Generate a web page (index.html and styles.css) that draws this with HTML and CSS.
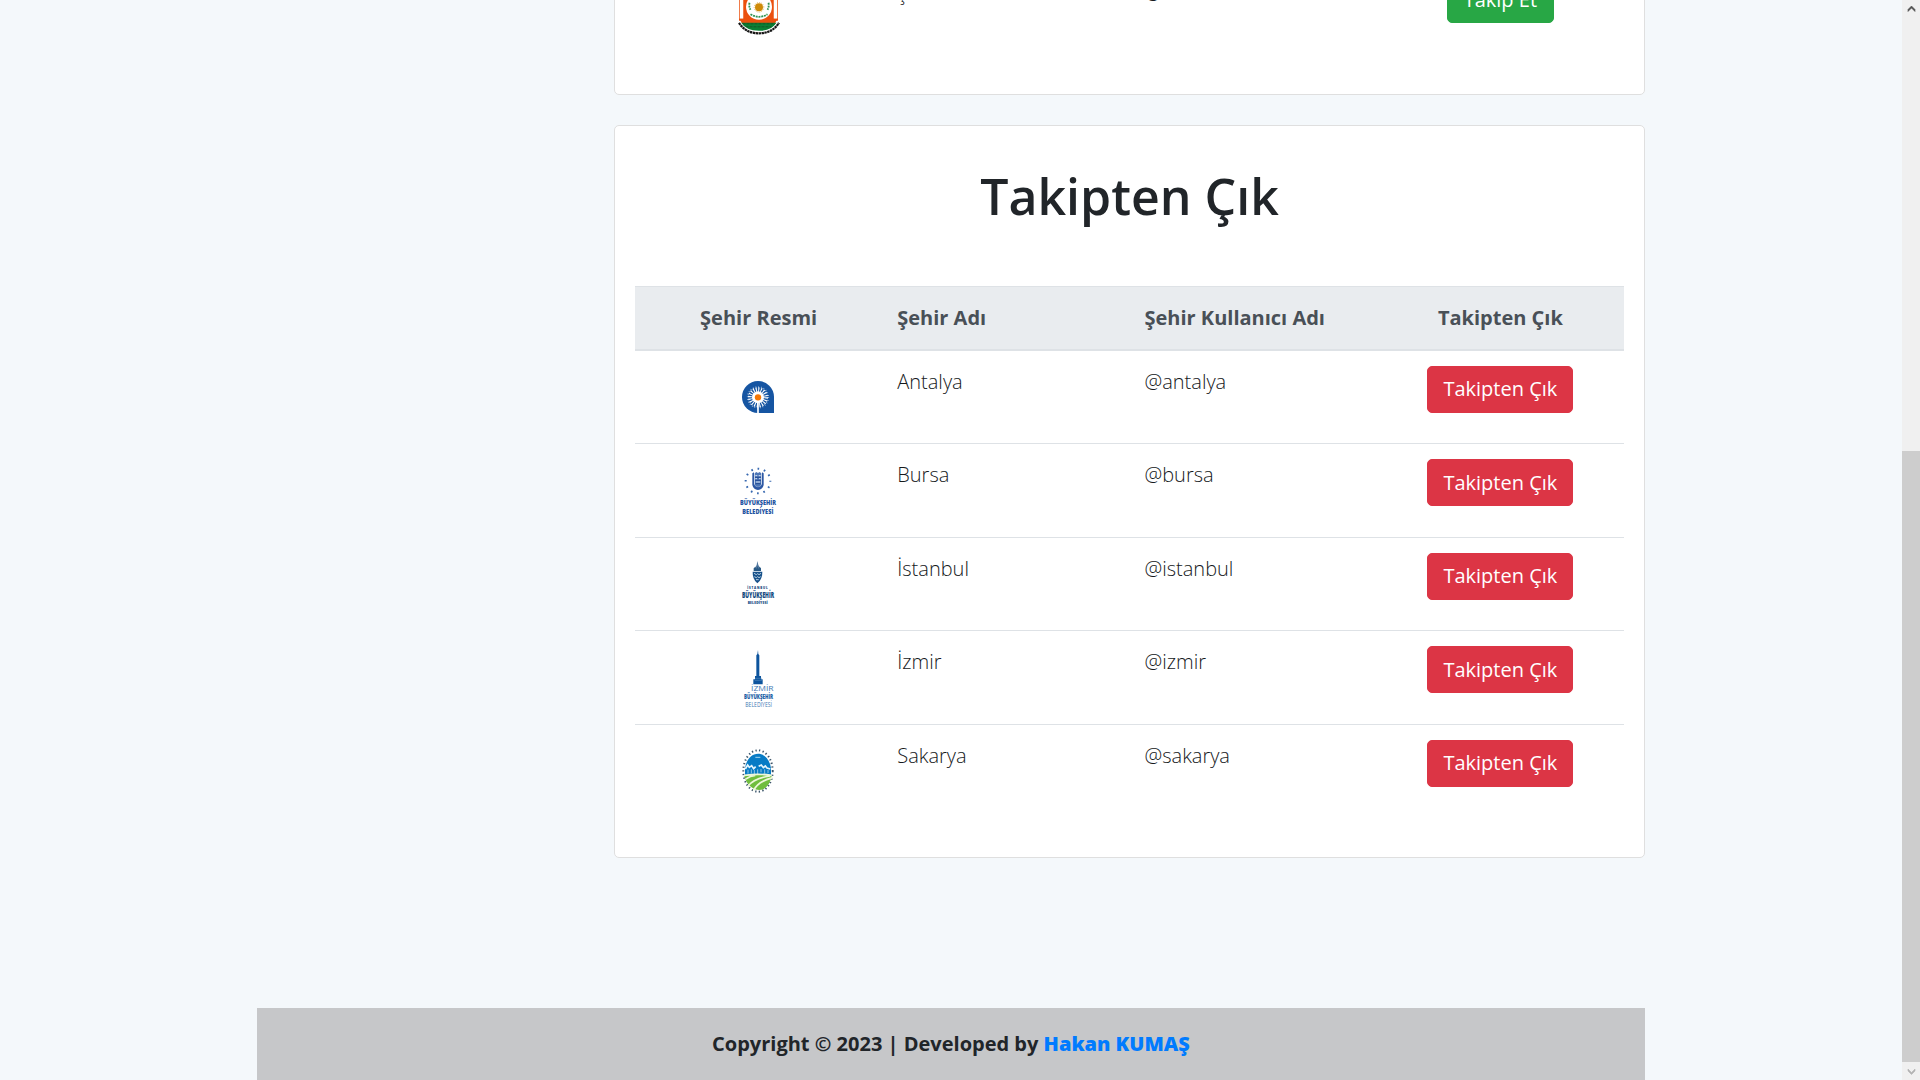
FILE: index.html
```html
<!DOCTYPE html>
<html lang="tr">
<head>
<meta charset="utf-8">
<title>Takipten Çık</title>
<link rel="stylesheet" href="styles.css">
</head>
<body>
<div class="page">
  <main class="cards">
    <section class="card card-follow">
      <div class="row">
        <div class="cell center">
          <svg class="logo" viewBox="-.5 1.200 62.5 62.5">
            <path d="M11.5 8h39v38h-39z" fill="#eb500f"/>
            <path d="M14 14v30M48 14v30" stroke="#fff" stroke-width="3.500"/>
            <path d="M12 44h38q-6 14-19 14T12 44z" fill="#eb500f"/>
            <path d="M13 48h36q-5 9-18 9T13 48z" fill="#0b8035"/>
            <path d="M15 49h32M18 52h26" stroke="#174c25" stroke-width=".8" stroke-dasharray="3 1"/>
            <circle cx="31.500" cy="32" r="13" fill="#fff"/>
            <path d="M22 28a10 10 0 0 0 1 7M41 28a10 10 0 0 1-1 7M23 39.500q8.500 5 17 0" fill="none" stroke="#2f9252" stroke-width="1.800" stroke-dasharray="2 .8"/>
            <circle cx="31.500" cy="32.500" r="4.800" fill="none" stroke="#e2b765" stroke-dasharray="1 1"/>
            <circle cx="31.500" cy="32.500" r="4" fill="#cf8b08"/>
            <path d="M12 47.500Q18 57 31.500 57T51 47.500" fill="none" stroke="#fff" stroke-width="2"/>
            <path d="M11.500 48Q18 58.500 31.500 58.500T51.500 48" fill="none" stroke="#151515" stroke-width="2.200" stroke-dasharray="2.400 .5"/>
          </svg>
        </div>
        <div class="cell name">Şanlıurfa</div>
        <div class="cell name">@sanliurfa</div>
        <div class="cell center"><button class="btn btn-green">Takip Et</button></div>
      </div>
    </section>

    <section class="card card-unfollow">
      <h1 class="title">Takipten Çık</h1>
      <div class="row head">
        <div class="cell center">Şehir Resmi</div>
        <div class="cell">Şehir Adı</div>
        <div class="cell">Şehir Kullanıcı Adı</div>
        <div class="cell center">Takipten Çık</div>
      </div>
      <div class="row first">
        <div class="cell center">
          <svg class="logo" viewBox="21 18 187.500 187.500">
            <path d="M66 111a48 48 0 0 1 96 0v48h-48a48 48 0 0 1-48-48z" fill="#1655a2"/>
            <g fill="none" stroke="#fff">
              <circle cx="114" cy="112" r="23" stroke-width="14" stroke-dasharray="3.200 4.027"/>
              <circle cx="114" cy="112" r="31" stroke-width="5" stroke-dasharray="2 6.115" opacity=".7"/>
            </g>
            <circle cx="114" cy="112" r="18" fill="#fff"/>
            <path d="M114 128v32" stroke="#fff" stroke-width="5"/>
            <circle cx="114" cy="112" r="9.500" fill="#f47706"/>
          </svg>
        </div>
        <div class="cell name">Antalya</div>
        <div class="cell name">@antalya</div>
        <div class="cell center"><button class="btn btn-red">Takipten Çık</button></div>
      </div>
      <div class="row">
        <div class="cell center">
          <svg class="logo" viewBox="21 27 187.500 187.500">
            <circle cx="114" cy="93" r="37" fill="none" stroke="#3768b0" stroke-width="6" stroke-dasharray="5 14.373" stroke-dashoffset="2.500"/>
            <path d="M97 70l5-3v35q3 9 12 10 9-1 12-10V67l5 3v35q-3 13-17 15-14-2-17-15z" fill="#2c57a3"/>
            <path d="M104 70l5-4 5 3 5-3 5 4v35q-5 6-10 6t-10-6z" fill="#4f78b8"/>
            <path d="M106 77h6m4 0h6m-16 9h5m6 0h5m-14 10h12" stroke="#d5e2f2" stroke-width="3"/>
            <path d="M105 82h18m-18 9h18m-17 10h16" stroke="#234b94" stroke-width="3"/>
            <g class="logo-text" fill="#2353a1" font-size="20">
              <text x="60" y="166" textLength="108" lengthAdjust="spacingAndGlyphs">BÜYÜKŞEHİR</text>
              <text x="67" y="192" textLength="93" lengthAdjust="spacingAndGlyphs">BELEDİYESİ</text>
            </g>
          </svg>
        </div>
        <div class="cell name">Bursa</div>
        <div class="cell name">@bursa</div>
        <div class="cell center"><button class="btn btn-red">Takipten Çık</button></div>
      </div>
      <div class="row">
        <div class="cell center">
          <svg class="logo" viewBox="21 24 187.500 187.500">
            <path d="M112 48l3 12 4 7v11h-13V67l4-7z" fill="#52789f"/>
            <path d="M101 70l5-5 3 7 3-8 3 8 4-7 4 5v8h-22z" fill="#285985"/>
            <path d="M98 80h29q1 22-15 35-15-13-14-35z" fill="#17518a"/>
            <path d="M102 85l7 4 4-3 4 3 6-4M103 95l6 3 4-3 4 3 5-3M108 104h8" fill="none" stroke="#b8cfe1" stroke-width="3"/>
            <g class="logo-text" fill="#11497f">
              <text x="82" y="133" font-size="9" textLength="61">İSTANBUL</text>
              <text x="66" y="158" font-size="25" textLength="96" lengthAdjust="spacingAndGlyphs">BÜYÜKŞEHİR</text>
              <text x="83" y="176" font-size="10" textLength="60">BELEDİYESİ</text>
            </g>
          </svg>
        </div>
        <div class="cell name">İstanbul</div>
        <div class="cell name">@istanbul</div>
        <div class="cell center"><button class="btn btn-red">Takipten Çık</button></div>
      </div>
      <div class="row">
        <div class="cell center">
          <svg class="logo" viewBox="21 17 187.500 187.500">
            <path d="M114 29l1 12 3 4v62h5v10h5v15h-28v-15h5v-10h4V45l3-4z" fill="#0d549d"/>
            <path d="M105 114h20M104 120h22" stroke="#4f85b9" stroke-width="2"/>
            <g class="logo-text" fill="#3e78b3" font-size="23">
              <text class="thin" x="93" y="152" textLength="68" lengthAdjust="spacingAndGlyphs">İZMİR</text>
              <text x="72" y="176" fill="#1b60a5" font-size="22" textLength="87" lengthAdjust="spacingAndGlyphs">BÜYÜKŞEHİR</text>
              <text class="thin" x="76" y="199" font-size="21" textLength="80" lengthAdjust="spacingAndGlyphs">BELEDİYESİ</text>
            </g>
          </svg>
        </div>
        <div class="cell name">İzmir</div>
        <div class="cell name">@izmir</div>
        <div class="cell center"><button class="btn btn-red">Takipten Çık</button></div>
      </div>
      <div class="row">
        <div class="cell center">
          <svg class="logo" viewBox="21 13 187.500 187.500">
            <ellipse cx="114" cy="106" rx="44" ry="62" fill="none" stroke="#3d566b" stroke-width="6" stroke-dasharray="4 7"/>
            <ellipse cx="114" cy="108" rx="40" ry="54" fill="#fff"/>
            <path d="M75 118V98c4-28 20-44 39-44s35 16 39 44v20z" fill="#077bc5"/>
            <path d="M106 65h15" stroke="#a5d6f1" stroke-width="3"/>
            <path d="M76 100l7-12 5 7 7-5 6 9 6-6M116 92l8-4 6 8 6-5 5 6 10 3" fill="none" stroke="#e4f4fc" stroke-width="5"/>
            <path d="M84 102v12m10-13v12m9-10v12m10-14v14m10-15v10m11-9v13m10-11v9" stroke="#8cc3e6" stroke-width="3"/>
            <path d="M73 121q45-7 82 0-5 28-25 40-17 5-31-3-20-12-26-37z" fill="#70bd3d"/>
            <path d="M73 119q41-6 82 0M150 121q-47 6-66 30M158 126q-44 11-57 38M106 119q-14 1-30 12" fill="none" stroke="#eef7d9" stroke-width="5"/>
          </svg>
        </div>
        <div class="cell name">Sakarya</div>
        <div class="cell name">@sakarya</div>
        <div class="cell center"><button class="btn btn-red">Takipten Çık</button></div>
      </div>
    </section>
  </main>
  <footer class="footer">Copyright © 2023 | Developed by <a class="author" href="#">Hakan KUMAŞ</a></footer>
</div>
<div class="scrollbar">
  <svg class="arrow" viewBox="0 0 18 18"><path d="M6 11.500v-2L9.500 6 13 9.500v2L9.500 8z" fill="#505050" stroke="#505050" stroke-width=".6"/></svg>
  <div class="thumb"></div>
  <svg class="arrow" viewBox="0 0 18 18"><path d="M6 7v2l3.500 3.500L13 9V7l-3.500 3.500z" fill="#b3b3b3" stroke="#b3b3b3" stroke-width=".6"/></svg>
</div>
</body>
</html>
```
FILE: styles.css
```css
* { box-sizing: border-box; }

body {
  margin: 0;
  height: 1080px;
  display: flex;
  overflow: hidden;
  background: #f4f8fb;
  color: #212529;
  font: 400 20px/30px "Open Sans", sans-serif;
}

/* The column is anchored to its end, so the footer rests on the bottom edge. */
.page {
  width: 1902px;
  height: 1080px;
  padding: 0 257px;
  display: flex;
  flex-direction: column;
  justify-content: flex-end;
  overflow: hidden;
}

.cards {
  flex: none;
  display: flex;
  flex-direction: column;
  gap: 30px;
  margin-left: 357px;
  margin-bottom: 150px;
}

.card {
  background: #fff;
  border: 1px solid #dfdfdf;
  border-radius: 5px;
  padding: 20px;
}

.card-unfollow { height: 733px; }

.title {
  margin: 20px 0 60px;
  font-size: 50px;
  font-weight: 600;
  line-height: 60px;
  text-align: center;
}

.row {
  display: grid;
  grid-template-columns: repeat(4, 1fr);
  height: 93.5px;
  border-top: 1px solid #dee2e6;
  font-weight: 300;
}

.row.first { height: 92px; border-top: 0; }

.cell { padding: 15px 15px 0; }
.name { padding-top: 16px; color: #16191c; }
.center { text-align: center; }

.card-follow { height: 156px; }
.card-follow .name { padding-top: 17px; }

.row.head {
  height: 65px;
  border-bottom: 2px solid #dee2e6;
  background: #e9ecef;
  color: #495057;
  font-weight: 700;
}

.row.head .cell { padding-top: 16px; }

.logo {
  display: block;
  width: 62.5px;
  height: 62.5px;
  margin: 0 auto;
}

.logo-text { font-family: "Open Sans", sans-serif; font-weight: 800; }
.thin { font-weight: 400; }

.btn {
  display: inline-block;
  height: 47px;
  padding: 7.5px 15px;
  border: 1px solid;
  border-radius: 5px;
  color: #fff;
  font: 400 20px/30px "Open Sans", sans-serif;
  vertical-align: top;
}

.first .btn { padding: 7px 15px 8px; }

.btn-red { background: #dc3545; border-color: #dc3545; }
.btn-green { padding: 8px 15.5px 7px; background: #28a745; border-color: #28a745; }

.footer {
  flex: none;
  height: 72px;
  padding-top: 21px;
  background: #c6c7c9;
  font-weight: 700;
  text-align: center;
}

.author { color: #007bff; font-weight: 800; text-decoration: none; }

.scrollbar {
  width: 18px;
  height: 1080px;
  display: flex;
  flex-direction: column;
  background: #f0f0f0;
}

.thumb { height: 611px; margin-top: auto; background: #cdcdcd; }
.arrow { width: 18px; height: 18px; flex: none; }
```
